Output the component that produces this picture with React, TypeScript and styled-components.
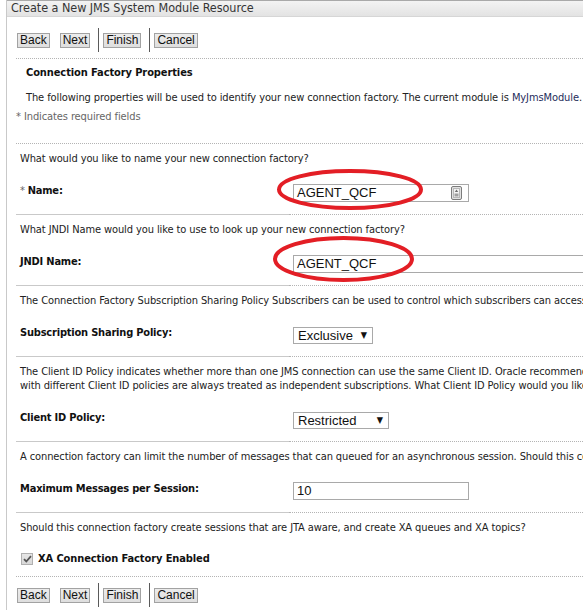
import React from "react";
import styled, { createGlobalStyle } from "styled-components";

const GlobalStyle = createGlobalStyle`
  html, body {
    margin: 0;
    padding: 0;
    background: #ffffff;
    overflow: hidden;
  }
  body {
    font-family: "DejaVu Sans Condensed", "DejaVu Sans", sans-serif;
    font-stretch: condensed;
    font-size: 11px;
    letter-spacing: -0.1px;
    color: #222222;
  }
`;

const Root = styled.div`
  position: relative;
  width: 583px;
  height: 610px;
  overflow: hidden;
`;

const Page = styled.div`
  margin-left: 6px;
  height: 100%;
  border-left: 1px solid #c9c9c9;
`;

const TitleBar = styled.div`
  height: 15px;
  border-top: 1px solid #a9a9a9;
  border-bottom: 1px solid #d6d6d6;
  background: linear-gradient(#f3f3f3, #e3e3e3);
  padding-left: 4px;
  font-size: 12.5px;
  line-height: 14px;
  letter-spacing: -0.05px;
  color: #353535;
  white-space: nowrap;
`;

const Content = styled.div`
  padding-left: 9px;
`;

const ButtonBar = styled.div<{ $top: number }>`
  display: flex;
  align-items: center;
  height: 24px;
  margin-top: ${(p) => p.$top}px;
  padding-left: 1px;
`;

const Button = styled.button<{ $gap?: number }>`
  box-sizing: border-box;
  height: 15px;
  margin: 0 ${(p) => p.$gap ?? 0}px 0 0;
  padding: 0 2px;
  border: 1px solid #a2a2a2;
  background: linear-gradient(#ececec, #dedede);
  font-family: "Liberation Sans", Arial, sans-serif;
  font-size: 12px;
  letter-spacing: 0;
  line-height: 12px;
  color: #111111;
`;

const BarSeparator = styled.span`
  width: 1px;
  height: 24px;
  margin: 0 4px 0 8px;
  background: #5a5a5a;
`;

const DottedRule = styled.div<{ $top: number }>`
  margin-top: ${(p) => p.$top}px;
  border-top: 1px dotted #b4b4b4;
`;

const Intro = styled.div`
  padding-left: 10px;
`;

const Heading = styled.div`
  margin-top: 7px;
  font-weight: bold;
  line-height: 14px;
  color: #111111;
`;

const Lead = styled.div`
  margin-top: 11px;
  line-height: 14px;
  white-space: nowrap;
`;

const ModuleName = styled.span`
  color: #1f2d5c;
`;

const Required = styled.div`
  margin-top: 5px;
  margin-bottom: 19px;
  line-height: 14px;
  color: #666666;
  white-space: nowrap;
`;

const Section = styled.div``;

const Question = styled.div`
  padding: 8px 4px 0;
  line-height: 14px;
  white-space: nowrap;
`;

const FieldRow = styled.div`
  display: grid;
  grid-template-columns: 273px 1fr;
`;

const LabelCell = styled.div`
  box-sizing: border-box;
  padding: 18px 4px 16px;
  line-height: 14px;
  font-weight: bold;
  letter-spacing: -0.2px;
  color: #111111;
  border-bottom: 1px solid #c9c9c9;
  white-space: nowrap;
`;

const Star = styled.span`
  font-weight: normal;
  color: #666666;
`;

const ValueCell = styled.div<{ $top: number }>`
  padding: ${(p) => p.$top}px 4px 0;
  border-bottom: 1px dotted #b4b4b4;
`;

const InputBox = styled.div<{ $width: number }>`
  position: relative;
  box-sizing: border-box;
  width: ${(p) => p.$width}px;
  height: 18px;
  border: 1px solid #a9a9a9;
  padding-left: 3px;
  font-family: "Liberation Sans", Arial, sans-serif;
  font-size: 13px;
  letter-spacing: 0;
  line-height: 16px;
  color: #111111;
  white-space: nowrap;
`;

const FillIcon = styled.svg`
  position: absolute;
  top: 1px;
  right: 6px;
`;

const SelectBox = styled.div<{ $width: number }>`
  box-sizing: border-box;
  display: flex;
  align-items: center;
  justify-content: space-between;
  width: ${(p) => p.$width}px;
  height: 17px;
  border: 1px solid #a9a9a9;
  padding: 0 5px 0 4px;
  font-family: "Liberation Sans", Arial, sans-serif;
  font-size: 13px;
  letter-spacing: 0;
  line-height: 15px;
  color: #111111;
`;

const Arrow = styled.span`
  font-family: "DejaVu Sans", sans-serif;
  font-size: 9px;
  line-height: 9px;
  color: #111111;
`;

const CheckRow = styled.label`
  display: flex;
  align-items: center;
  gap: 5px;
  padding: 17px 5px 10px;
  line-height: 14px;
  font-weight: bold;
  color: #111111;
`;

const CheckBox = styled.span`
  box-sizing: border-box;
  display: inline-flex;
  align-items: center;
  justify-content: center;
  width: 12px;
  height: 12px;
  border: 1px solid #b0b0b0;
  background: linear-gradient(#e6e6e6, #d8d8d8);
`;

const Annotations = styled.svg`
  position: absolute;
  top: 0;
  left: 0;
  pointer-events: none;
`;

const Toolbar: React.FC<{ top: number }> = ({ top }) => (
  <ButtonBar $top={top}>
    <Button $gap={10}>Back</Button>
    <Button>Next</Button>
    <BarSeparator />
    <Button>Finish</Button>
    <BarSeparator />
    <Button>Cancel</Button>
  </ButtonBar>
);

const AutofillGlyph = () => (
  <FillIcon width="11" height="14" viewBox="0 0 11 14">
    <rect x="0.5" y="0.5" width="10" height="13" rx="1.5" fill="#e2e2e2" stroke="#7c7c7c" />
    <rect x="2.5" y="2.5" width="6" height="9" fill="#f3f3f3" stroke="#b8b8b8" />
    <path d="M5.5 3.5 L7.2 6 L3.8 6 Z" fill="#6c6c6c" />
    <rect x="3.5" y="7.5" width="4" height="3" fill="#a0a0a0" />
  </FillIcon>
);

type Field =
  | { kind: "text"; value: string; width: number; icon?: boolean }
  | { kind: "select"; value: string; width: number };

interface Prop {
  question: React.ReactNode;
  label: React.ReactNode;
  field: Field;
}

const props: Prop[] = [
  {
    question: "What would you like to name your new connection factory?",
    label: (
      <>
        <Star>* </Star>Name:
      </>
    ),
    field: { kind: "text", value: "AGENT_QCF", width: 176, icon: true },
  },
  {
    question: "What JNDI Name would you like to use to look up your new connection factory?",
    label: "JNDI Name:",
    field: { kind: "text", value: "AGENT_QCF", width: 320 },
  },
  {
    question:
      "The Connection Factory Subscription Sharing Policy Subscribers can be used to control which subscribers can access new subscriptions.",
    label: "Subscription Sharing Policy:",
    field: { kind: "select", value: "Exclusive", width: 80 },
  },
  {
    question: (
      <>
        The Client ID Policy indicates whether more than one JMS connection can use the same Client ID. Oracle recommends
        reviewing the documentation before changing this value. Subscriptions created
        <br />
        with different Client ID policies are always treated as independent subscriptions. What Client ID Policy would you
        like to use?
      </>
    ),
    label: "Client ID Policy:",
    field: { kind: "select", value: "Restricted", width: 96 },
  },
  {
    question:
      "A connection factory can limit the number of messages that can queued for an asynchronous session. Should this connection factory have a limit?",
    label: "Maximum Messages per Session:",
    field: { kind: "text", value: "10", width: 176 },
  },
];

const renderField = (f: Field) =>
  f.kind === "text" ? (
    <ValueCell $top={18}>
      <InputBox $width={f.width}>
        {f.value}
        {f.icon && <AutofillGlyph />}
      </InputBox>
    </ValueCell>
  ) : (
    <ValueCell $top={19}>
      <SelectBox $width={f.width}>
        <span>{f.value}</span>
        <Arrow>▼</Arrow>
      </SelectBox>
    </ValueCell>
  );

export default function App() {
  return (
    <Root>
      <GlobalStyle />
      <Page>
        <TitleBar>Create a New JMS System Module Resource</TitleBar>
        <Content>
          <Toolbar top={11} />
          <DottedRule $top={6} />
          <Intro>
            <Heading>Connection Factory Properties</Heading>
            <Lead>
              The following properties will be used to identify your new connection factory. The current module is{" "}
              <ModuleName>MyJmsModule</ModuleName>.
            </Lead>
          </Intro>
          <Required>* Indicates required fields</Required>
          <DottedRule $top={0} />
          {props.map((p, i) => (
            <Section key={i}>
              <Question>{p.question}</Question>
              <FieldRow>
                <LabelCell>{p.label}</LabelCell>
                {renderField(p.field)}
              </FieldRow>
            </Section>
          ))}
          <Section>
            <Question>
              Should this connection factory create sessions that are JTA aware, and create XA queues and XA topics?
            </Question>
            <CheckRow>
              <CheckBox>
                <svg width="9" height="8" viewBox="0 0 9 8">
                  <path d="M1 4.2 L3.3 6.5 L8 1.2" fill="none" stroke="#555555" strokeWidth="1.8" />
                </svg>
              </CheckBox>
              XA Connection Factory Enabled
            </CheckRow>
          </Section>
          <DottedRule $top={0} />
          <Toolbar top={6} />
        </Content>
      </Page>
      <Annotations width="583" height="610" viewBox="0 0 583 610">
        <ellipse cx="350" cy="189.5" rx="71" ry="18.5" fill="none" stroke="#e31e25" strokeWidth="4" />
        <ellipse cx="343.5" cy="259" rx="68.5" ry="21" fill="none" stroke="#e31e25" strokeWidth="4" />
      </Annotations>
    </Root>
  );
}
